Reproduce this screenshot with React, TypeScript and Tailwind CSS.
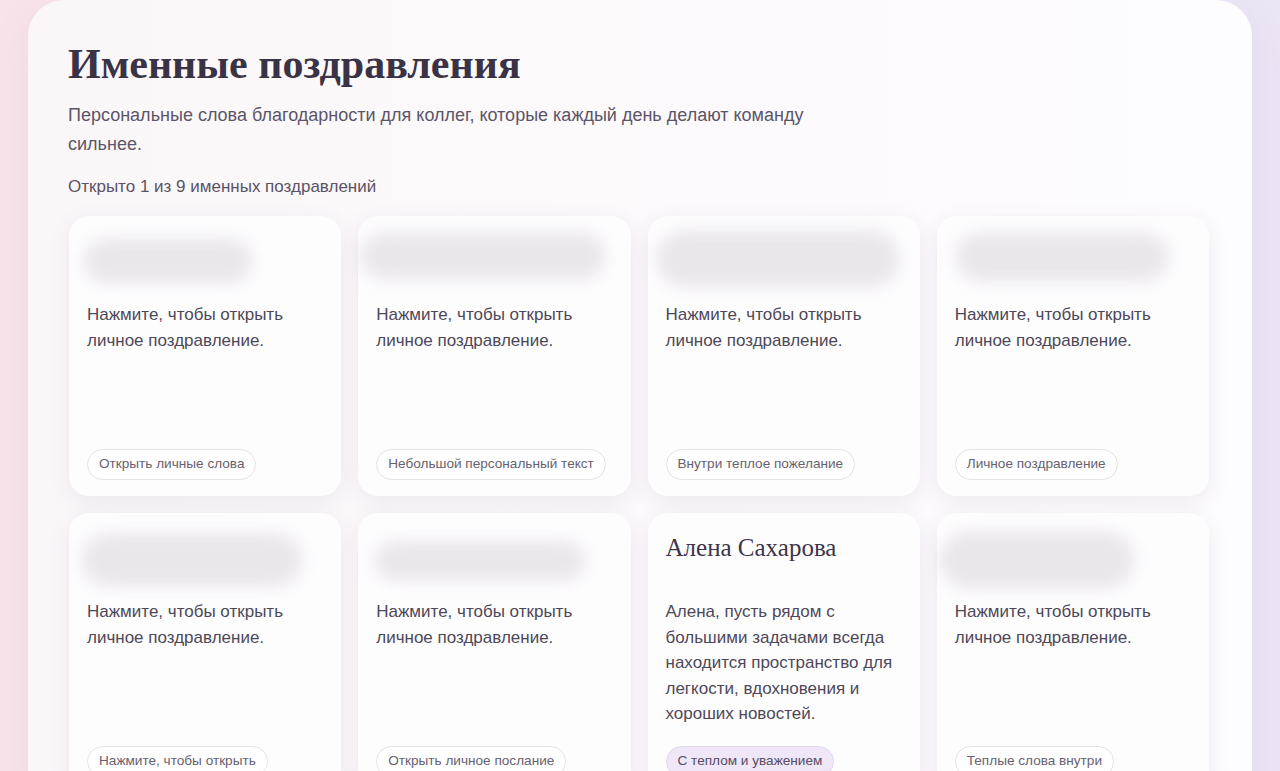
import React from 'react';

type Card = {
  name?: string;
  blob: { w: number; h: number; x: number; y: number };
  text: string;
  tag: string;
  open?: boolean;
};

const cards: Card[] = [
  { blob: { w: 170, h: 46, x: -4, y: 4 }, text: 'Нажмите, чтобы открыть личное поздравление.', tag: 'Открыть личные слова' },
  { blob: { w: 246, h: 48, x: -16, y: -2 }, text: 'Нажмите, чтобы открыть личное поздравление.', tag: 'Небольшой персональный текст' },
  { blob: { w: 244, h: 58, x: -10, y: -4 }, text: 'Нажмите, чтобы открыть личное поздравление.', tag: 'Внутри теплое пожелание' },
  { blob: { w: 214, h: 50, x: 0, y: -2 }, text: 'Нажмите, чтобы открыть личное поздравление.', tag: 'Личное поздравление' },
  { blob: { w: 222, h: 54, x: -6, y: 2 }, text: 'Нажмите, чтобы открыть личное поздравление.', tag: 'Нажмите, чтобы открыть' },
  { blob: { w: 212, h: 40, x: -2, y: 10 }, text: 'Нажмите, чтобы открыть личное поздравление.', tag: 'Открыть личное послание' },
  {
    name: 'Алена Сахарова',
    blob: { w: 0, h: 0, x: 0, y: 0 },
    text: 'Алена, пусть рядом с большими задачами всегда находится пространство для легкости, вдохновения и хороших новостей.',
    tag: 'С теплом и уважением',
    open: true,
  },
  { blob: { w: 196, h: 58, x: -16, y: 0 }, text: 'Нажмите, чтобы открыть личное поздравление.', tag: 'Теплые слова внутри' },
];

const sans = { fontFamily: '"Liberation Sans", Arial, sans-serif' };
const serif = { fontFamily: '"Liberation Serif", "Times New Roman", serif' };

function GreetingCard({ card }: { card: Card }) {
  return (
    <div className="flex min-h-[280px] flex-col rounded-[20px] bg-[#fefdfe] px-[18px] pt-[18px] pb-[16px] shadow-[0_6px_22px_rgba(90,70,110,0.09)]">
      <div className="relative mb-[12px] h-[56px]">
        {card.name ? (
          <div className="text-[25px] leading-[34px] text-[#3d3548]" style={serif}>
            {card.name}
          </div>
        ) : (
          <div
            className="absolute rounded-full bg-[#eae7ec] blur-[8px]"
            style={{ width: card.blob.w, height: card.blob.h, left: card.blob.x, top: card.blob.y }}
          />
        )}
      </div>
      <p className="text-[17px] leading-[25.5px] text-[#4d4857]">{card.text}</p>
      <div className="mt-auto pt-[19px]">
        <span
          className={
            card.open
              ? 'inline-flex h-[31px] items-center rounded-full border border-[#e3d7ee] bg-[#efe6f7] px-[11px] text-[13.6px] text-[#564c63]'
              : 'inline-flex h-[31px] items-center rounded-full border border-[#e6e1e8] bg-white px-[11px] text-[13.6px] text-[#67616e]'
          }
        >
          {card.tag}
        </span>
      </div>
    </div>
  );
}

export default function App() {
  return (
    <div
      className="min-h-[771px] bg-gradient-to-r from-[#f9e3ea] via-[#f6eef4] to-[#ebe5f6] px-[28px]"
      style={sans}
    >
      <div className="rounded-t-[36px] bg-gradient-to-r from-[#fbf7f9] to-[#fdfcfe] px-[40px] pt-[38px] pb-[40px] shadow-[0_10px_40px_rgba(120,90,130,0.08)]">
        <h1 className="text-[42px] leading-[52px] font-semibold text-[#3a3245]" style={serif}>
          Именные поздравления
        </h1>
        <p className="mt-[11px] max-w-[745px] text-[18px] leading-[29px] text-[#5c5568]">
          Персональные слова благодарности для коллег, которые каждый день делают команду сильнее.
        </p>
        <p className="mt-[17px] text-[17px] leading-[22px] text-[#5a5365]">
          Открыто 1 из 9 именных поздравлений
        </p>
        <div className="mt-[18px] mr-[3px] grid grid-cols-4 gap-[17px] pl-px">
          {cards.map((c, i) => (
            <GreetingCard key={i} card={c} />
          ))}
        </div>
      </div>
    </div>
  );
}
